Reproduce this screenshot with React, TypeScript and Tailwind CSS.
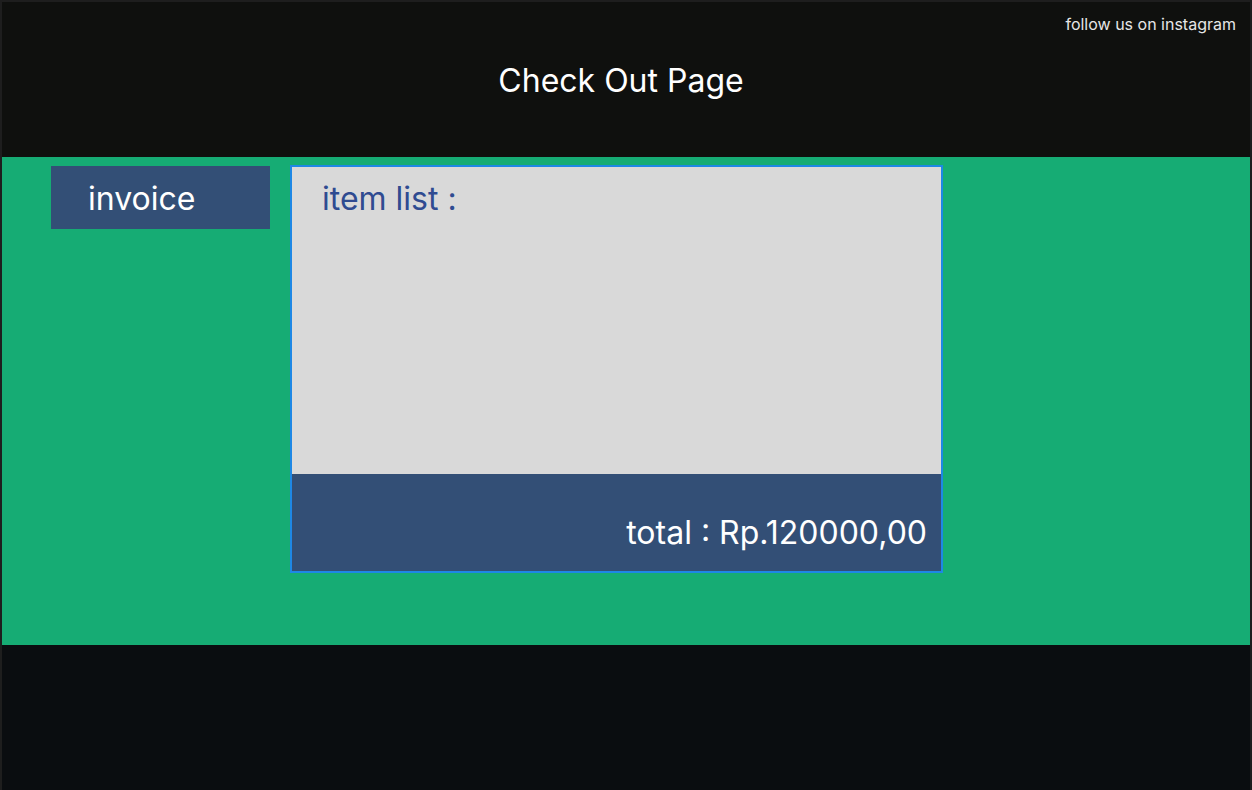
export default function App() {
    return (
        <div className="flex h-[790px] w-[1252px] flex-col border-x-2 border-t-2 border-[#1e1e1e] font-['Inter',sans-serif]">
            <header className="flex h-[155px] flex-col bg-[#0f100e] px-[14px] pt-[12px]">
                <p className="self-end text-[16px] leading-[20px] text-[#e6e6e6]">
                    follow us on instagram
                </p>
                <h1 className="mt-[28px] pr-[10px] text-center text-[32px] leading-[38px] text-white">
                    Check Out Page
                </h1>
            </header>

            <main className="flex h-[488px] items-start gap-[20px] bg-[#16ac74] pl-[49px] pt-[8px]">
                <div className="mt-[1px] flex h-[63px] w-[219px] items-center bg-[#334f76] pl-[37px] pt-[2px]">
                    <span className="text-[32px] leading-none text-white">invoice</span>
                </div>

                <div className="flex h-[408px] w-[653px] flex-col border-2 border-[#1e88e5]">
                    <div className="flex-1 bg-[#d9d9d9] px-[30px] pt-[13px]">
                        <p className="text-[32px] leading-[38px] text-[#2f4b91]">item list :</p>
                    </div>
                    <div className="flex h-[97px] items-end justify-end bg-[#334f76] pb-[19px] pr-[14px]">
                        <p className="text-[32px] leading-[38px] text-white">
                            total : Rp.120000,00
                        </p>
                    </div>
                </div>
            </main>

            <footer className="flex-1 bg-[#0a0d10]" />
        </div>
    );
}
